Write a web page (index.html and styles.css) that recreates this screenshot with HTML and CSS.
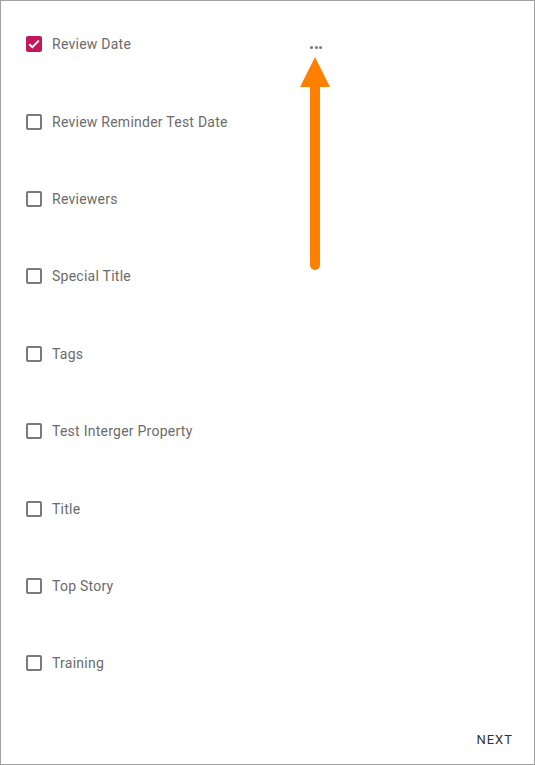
FILE: index.html
```html
<!DOCTYPE html>
<html>
<head>
<meta charset="utf-8">
<link rel="stylesheet" href="styles.css">
</head>
<body>
<div class="panel">
  <ul class="list">
    <li class="row">
      <span class="box checked"><svg width="16" height="16" viewBox="0 0 16 16"><path d="M3.2 8.2 L6.4 11.2 L12.8 4.6" fill="none" stroke="#fff" stroke-width="2"/></svg></span>
      <span class="label">Review Date</span>
      <span class="more"><i></i><i></i><i></i></span>
    </li>
    <li class="row"><span class="box"></span><span class="label">Review Reminder Test Date</span></li>
    <li class="row"><span class="box"></span><span class="label">Reviewers</span></li>
    <li class="row"><span class="box"></span><span class="label">Special Title</span></li>
    <li class="row"><span class="box"></span><span class="label">Tags</span></li>
    <li class="row"><span class="box"></span><span class="label">Test Interger Property</span></li>
    <li class="row"><span class="box"></span><span class="label">Title</span></li>
    <li class="row"><span class="box"></span><span class="label">Top Story</span></li>
    <li class="row"><span class="box"></span><span class="label">Training</span></li>
  </ul>
  <div class="footer"><button class="next">NEXT</button></div>
  <svg class="arrow" width="40" height="220" viewBox="0 0 40 220">
    <polygon points="15,0 30,30 0,30" fill="#ff8000"/>
    <line x1="15" y1="28" x2="15" y2="208" stroke="#ff8000" stroke-width="10" stroke-linecap="round"/>
  </svg>
</div>
</body>
</html>
```
FILE: styles.css
```css
html, body {
  margin: 0;
  padding: 0;
  background: #fff;
}
.panel {
  position: relative;
  width: 535px;
  height: 765px;
  box-sizing: border-box;
  border: 1px solid #a0a0a0;
  font-family: Roboto, "Liberation Sans", sans-serif;
  display: flex;
  flex-direction: column;
}
.list {
  list-style: none;
  margin: 0;
  padding: 4.6px 0 0 0;
}
.row {
  height: 77.4px;
  display: flex;
  align-items: center;
  padding-left: 25px;
}
.box {
  width: 16px;
  height: 16px;
  box-sizing: border-box;
  border: 2px solid #7a7a7a;
  border-radius: 2px;
  flex: 0 0 16px;
  position: relative;
}
.box.checked {
  background: #c2185b;
  border-color: #c2185b;
}
.box.checked svg {
  position: absolute;
  left: -2px;
  top: -2px;
}
.label {
  margin-left: 10px;
  width: 258px;
  font-size: 14px;
  letter-spacing: 0.25px;
  color: #6b6b6b;
}
.more {
  display: flex;
  gap: 1.5px;
  margin-top: 6px;
}
.more i {
  width: 3px;
  height: 3px;
  border-radius: 50%;
  background: #777;
}
.footer {
  flex: 1;
  display: flex;
  justify-content: flex-end;
  align-items: center;
  padding: 13px 21px 0 0;
}
.next {
  background: none;
  border: none;
  font-family: Roboto, "Liberation Sans", sans-serif;
  font-size: 13px;
  letter-spacing: 1px;
  color: #333;
  padding: 0;
}
.arrow {
  position: absolute;
  left: 299px;
  top: 56px;
}
```
